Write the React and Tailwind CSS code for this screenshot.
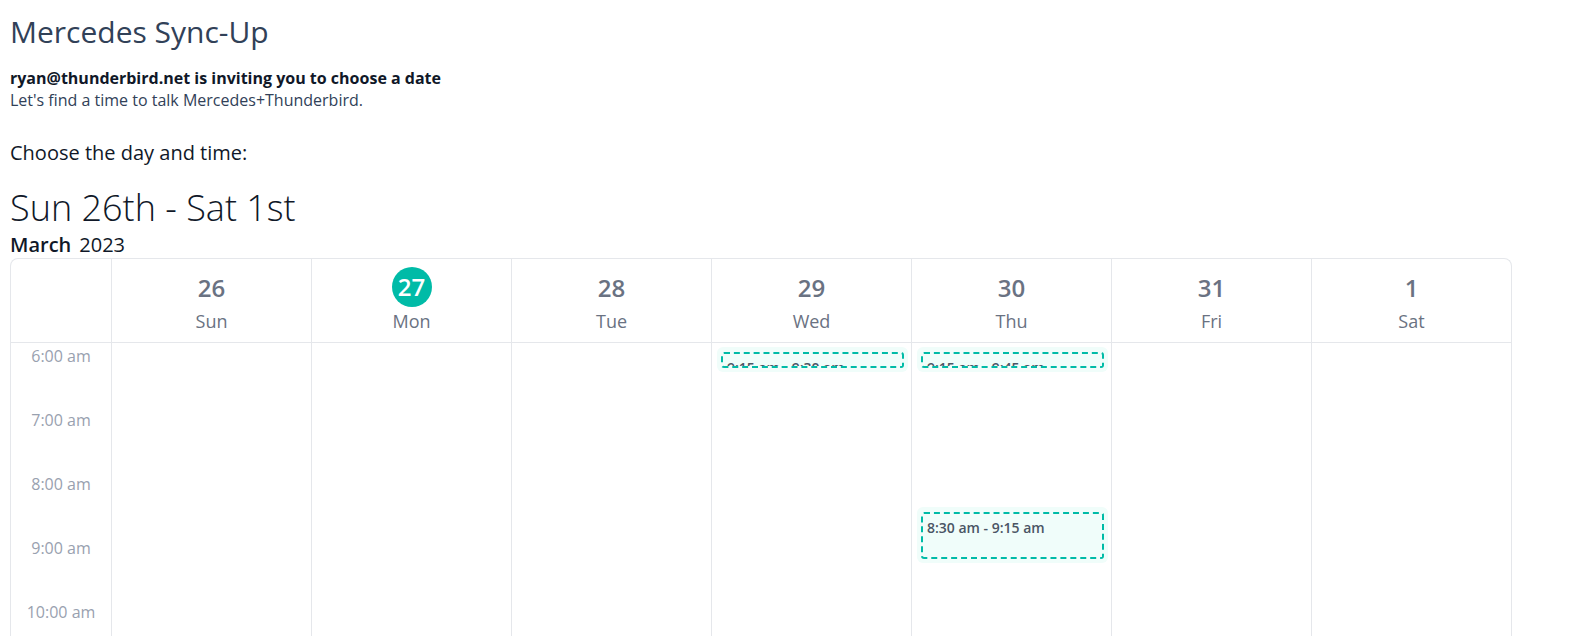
const days = [
  { num: '26', name: 'Sun' },
  { num: '27', name: 'Mon', today: true },
  { num: '28', name: 'Tue' },
  { num: '29', name: 'Wed' },
  { num: '30', name: 'Thu' },
  { num: '31', name: 'Fri' },
  { num: '1', name: 'Sat' },
];

const hours = ['6:00 am', '7:00 am', '8:00 am', '9:00 am', '10:00 am', '11:00 am'];

const events = {
  Wed: [{ label: '9:15 am - 9:30 am', top: 4, height: 25 }],
  Thu: [
    { label: '9:15 am - 9:45 am', top: 4, height: 25 },
    { label: '8:30 am - 9:15 am', top: 164, height: 56 },
  ],
};

function EventSlot({ ev }) {
  return (
    <div
      className="absolute left-[5px] right-[3px] rounded-md bg-teal-50 px-1 pt-[5px] pb-1"
      style={{ top: ev.top, height: ev.height }}
    >
      <div className="h-full overflow-hidden rounded-[3px] border-2 border-dashed border-teal-500 px-1 pt-1 text-sm font-semibold leading-5 whitespace-nowrap text-gray-600">
        {ev.label}
      </div>
    </div>
  );
}

export default function App() {
  return (
    <div
      className="flex h-screen flex-col overflow-hidden bg-white px-[10px] pt-[14px]"
      style={{ fontFamily: '"Open Sans", sans-serif' }}
    >
      <h1 className="text-[30px] leading-[36px] text-slate-700">Mercedes Sync-Up</h1>
      <div className="mt-[17px] text-base leading-[22px]">
        <p className="font-bold text-gray-900">ryan@thunderbird.net is inviting you to choose a date</p>
        <p className="text-slate-700">Let's find a time to talk Mercedes+Thunderbird.</p>
      </div>
      <p className="mt-[30px] text-xl leading-6 text-gray-900">Choose the day and time:</p>

      <h2 className="mt-[21px] text-[36px] font-light leading-[43px] text-gray-900">Sun 26th - Sat 1st</h2>
      <div className="mt-1 flex gap-2 text-xl leading-6 text-gray-900">
        <span className="font-semibold">March</span>
        <span>2023</span>
      </div>

      <div className="mt-px flex min-h-0 w-[1502px] flex-1 flex-col rounded-t-lg border border-b-0 border-gray-200">
        <div className="grid grid-cols-[100px_repeat(7,200px)] border-b border-gray-200">
          <div />
          {days.map((d) => (
            <div key={d.name} className="flex h-[83px] flex-col items-center border-l border-gray-200 pt-2">
              {d.today ? (
                <span className="flex h-10 w-10 items-center justify-center rounded-full bg-teal-500 text-2xl font-semibold text-white">
                  {d.num}
                </span>
              ) : (
                <span className="flex h-10 items-center pt-[2px] text-2xl font-semibold text-gray-500">{d.num}</span>
              )}
              <span className="text-lg leading-7 text-gray-500">{d.name}</span>
            </div>
          ))}
        </div>

        <div className="grid min-h-0 flex-1 grid-cols-[100px_repeat(7,200px)] overflow-hidden">
          <div className="flex flex-col items-center">
            {hours.map((h) => (
              <div key={h} className="h-16 shrink-0 pt-px text-base leading-6 text-gray-400">
                {h}
              </div>
            ))}
          </div>
          {days.map((d) => (
            <div key={d.name} className="relative border-l border-gray-200">
              {(events[d.name] || []).map((ev) => (
                <EventSlot key={ev.label} ev={ev} />
              ))}
            </div>
          ))}
        </div>
      </div>
    </div>
  );
}
